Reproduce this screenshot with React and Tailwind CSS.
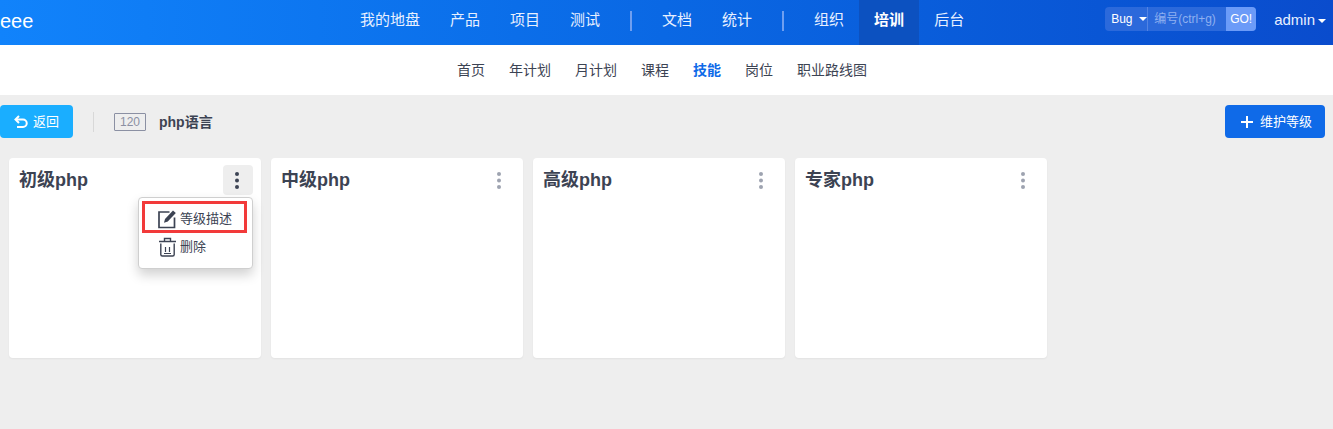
const FONT = "font-['Liberation_Sans','Noto_Sans_CJK_SC',sans-serif]";

function Caret({ className }) {
  return (
    <svg width="8" height="4" viewBox="0 0 8 4" className={className}>
      <path d="M0 0h8L4 4z" fill="currentColor" />
    </svg>
  );
}

function NavItem({ children, active }) {
  return (
    <div
      className={
        active
          ? "flex h-[45px] items-center bg-[#0c51c0] px-[15px] pb-1 text-[15px] font-bold text-white"
          : "flex h-[45px] items-center px-[15px] pb-1 text-[15px] text-[#e8f0ff]"
      }
    >
      {children}
    </div>
  );
}

function Divider() {
  return <div className="mx-[15px] mb-1 h-5 w-0.5 bg-[#6f9ff0]" />;
}

function Dots({ color }) {
  return (
    <svg width="6" height="18" viewBox="0 0 6 18" className={color}>
      <circle cx="3" cy="3" r="2" fill="currentColor" />
      <circle cx="3" cy="9.5" r="2" fill="currentColor" />
      <circle cx="3" cy="16" r="2" fill="currentColor" />
    </svg>
  );
}

function Card({ title, open }) {
  return (
    <div className="relative h-[200px] w-[252px] rounded bg-white shadow-[0_1px_2px_rgba(0,0,0,0.05)]">
      <div className="flex items-start justify-between pl-2.5 pr-2 pt-[7px]">
        <div className="mt-[3px] text-lg font-bold leading-[24px] text-[#3c4353]">{title}</div>
        <div className={open ? "flex h-[30px] w-[30px] items-center justify-center rounded bg-[#eeeeee] pr-0.5" : "flex h-[30px] w-[30px] items-center justify-center rounded pr-0.5"}>
          <Dots color={open ? "text-[#3c4353]" : "text-[#9ea3b0]"} />
        </div>
      </div>
      {open && (
        <div className="absolute left-[129px] top-[39px] z-10 flex h-[72px] w-[115px] flex-col rounded border border-[#cfcfcf] bg-white pl-[19px] pt-[11px] text-[13px] text-[#3c4353] shadow-[0_6px_12px_rgba(0,0,0,0.18)]">
          <div className="absolute left-[3px] top-[3px] h-[32px] w-[105px] border-[3px] border-[#f23a3a]" />
          <div className="flex h-5 items-center gap-[3px]">
            <svg width="19" height="20" viewBox="0 0 19 20" fill="none" className="text-[#3c4353]">
              <path d="M11.5 3H1v15.5h15.5V8.5" stroke="currentColor" strokeWidth="1.7" />
              <path d="M6 13.8l1-3.8 8-8.5 2.8 2.6-8 8.5z" fill="currentColor" />
            </svg>
            等级描述
          </div>
          <div className="mt-2 flex h-5 items-center gap-[3px]">
            <svg width="19" height="20" viewBox="0 0 19 20" fill="none" className="text-[#3c4353]">
              <path d="M1 4.5h17M6.5 4V1.5h6V4" stroke="currentColor" strokeWidth="1.4" />
              <path d="M2.8 6.5v11q0 1.5 1.5 1.5h10.4q1.5 0 1.5-1.5V6.5" stroke="currentColor" strokeWidth="1.4" />
              <path d="M7.5 10v5M11.5 10v5M6 16.5h7" stroke="currentColor" strokeWidth="1.2" />
            </svg>
            删除
          </div>
        </div>
      )}
    </div>
  );
}

export default function App() {
  return (
    <div className={`${FONT} h-[429px] overflow-hidden bg-[#eeeeee]`}>
      <header className="flex h-[45px] items-center bg-gradient-to-r from-[#1183fb] to-[#0a4ccd]">
        <div className="w-[345px] pb-1 text-xl leading-none text-white">eee</div>
        <nav className="flex items-center">
          <NavItem>我的地盘</NavItem>
          <NavItem>产品</NavItem>
          <NavItem>项目</NavItem>
          <NavItem>测试</NavItem>
          <Divider />
          <NavItem>文档</NavItem>
          <NavItem>统计</NavItem>
          <Divider />
          <NavItem>组织</NavItem>
          <NavItem active>培训</NavItem>
          <NavItem>后台</NavItem>
        </nav>
        <div className="ml-auto flex items-center pb-1 pr-[7px]">
          <div className="mb-[3px] flex h-6 w-[151px] items-center overflow-hidden rounded-sm bg-[#2b69db]">
            <div className="flex h-6 w-[43px] items-center gap-1.5 border-r border-[#5384e3] pl-[6px] text-xs text-white">
              <span>Bug</span>
              <Caret />
            </div>
            <div className="flex-1 pl-1.5 text-xs text-[#8fb0f0]">编号(ctrl+g)</div>
            <div className="flex h-6 w-[30px] items-center justify-center bg-[#6b9bf8] text-xs text-white">GO!</div>
          </div>
          <div className="ml-[18px] flex items-center gap-[3px] text-[15px] text-[#e8f0ff]">
            admin
            <Caret className="text-white" />
          </div>
        </div>
      </header>

      <div className="flex h-[50px] items-center justify-center gap-6 bg-white pr-[9px] text-sm text-[#3c4353]">
        <span>首页</span>
        <span>年计划</span>
        <span>月计划</span>
        <span>课程</span>
        <span className="font-bold text-[#0f6ae8]">技能</span>
        <span>岗位</span>
        <span>职业路线图</span>
      </div>

      <div className="mt-2.5 flex h-[33px] items-center justify-between pr-2">
        <div className="flex items-center">
          <button className="flex h-[33px] w-[73px] items-center gap-[5px] rounded bg-[#1aaeff] pl-3.5 text-[13px] text-white">
            <svg width="14" height="14" viewBox="0 0 14 14" fill="none">
              <path d="M5 1L1.5 4.5 5 8" stroke="white" strokeWidth="2" />
              <path d="M2 4.5h7a3.6 3.6 0 0 1 0 7.5H3" stroke="white" strokeWidth="2" />
            </svg>
            返回
          </button>
          <div className="ml-5 h-5 w-px bg-[#d8d8d8]" />
          <div className="ml-5 flex h-[18px] w-8 items-center justify-center rounded-[1px] border border-[#8b90a3] text-xs text-[#8b90a3]">120</div>
          <div className="ml-[13px] text-sm font-bold text-[#3c4353]">php语言</div>
        </div>
        <button className="flex h-[33px] w-[100px] items-center gap-[6px] rounded bg-[#0f6ae8] pl-[15px] text-[13px] text-white">
          <svg width="14" height="14" viewBox="0 0 14 14" fill="none">
            <path d="M7 1v12M1 7h12" stroke="white" strokeWidth="2" />
          </svg>
          维护等级
        </button>
      </div>

      <div className="mt-5 flex gap-2.5 pl-[9px]">
        <Card title="初级php" open />
        <Card title="中级php" />
        <Card title="高级php" />
        <Card title="专家php" />
      </div>
    </div>
  );
}
